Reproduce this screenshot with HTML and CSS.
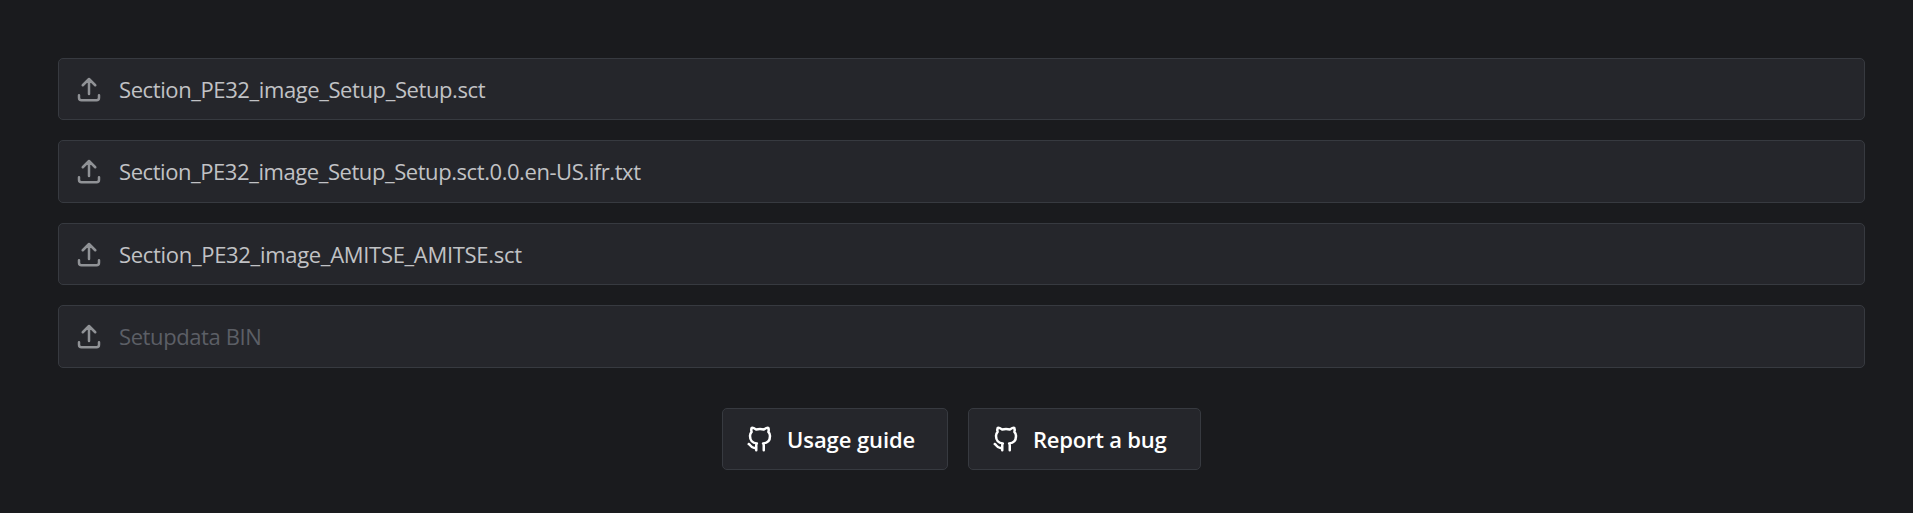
FILE: index.html
```html
<!DOCTYPE html>
<html lang="en">
<head>
<meta charset="utf-8">
<title>Setup files</title>
<link rel="stylesheet" href="styles.css">
</head>
<body>
<svg class="sprite" aria-hidden="true">
<symbol id="upload" viewBox="0 0 24 24"><path d="M4 17v2a2 2 0 0 0 2 2h12a2 2 0 0 0 2-2v-2M7 9l5-5l5 5M12 4v12"/></symbol>
<symbol id="github" viewBox="0 0 24 24"><path d="M9 19c-4.3 1.4 -4.3 -2.5 -6 -3m12 5v-3.5c0 -1 .1 -1.4 -.5 -2c2.8 -.3 5.5 -1.4 5.5 -6a4.6 4.6 0 0 0 -1.3 -3.2a4.2 4.2 0 0 0 -.1 -3.2s-1.1 -.3 -3.5 1.3a12.3 12.3 0 0 0 -6.2 0c-2.4 -1.6 -3.5 -1.3 -3.5 -1.3a4.2 4.2 0 0 0 -.1 3.2a4.6 4.6 0 0 0 -1.3 3.2c0 4.6 2.7 5.7 5.5 6c-.6 .6 -.6 1.2 -.5 2v3.5"/></symbol>
</svg>
<main class="page">
<div class="files">
<button class="file setup"><svg class="icon"><use href="#upload"/></svg><span>Section_PE32_image_Setup_Setup.sct</span></button>
<button class="file ifr"><svg class="icon"><use href="#upload"/></svg><span>Section_PE32_image_Setup_Setup.sct.0.0.en-US.ifr.txt</span></button>
<button class="file amitse"><svg class="icon"><use href="#upload"/></svg><span>Section_PE32_image_AMITSE_AMITSE.sct</span></button>
<button class="file empty"><svg class="icon"><use href="#upload"/></svg><span>Setupdata BIN</span></button>
</div>
<div class="links">
<a class="link guide"><svg class="icon"><use href="#github"/></svg><span>Usage guide</span></a>
<a class="link bug"><svg class="icon"><use href="#github"/></svg><span>Report a bug</span></a>
</div>
</main>
</body>
</html>
```

FILE: styles.css
```css
* { box-sizing: border-box; }
body { margin: 0; background: #1a1b1e; font-family: "Open Sans", "Noto Sans", sans-serif; }
.sprite { display: none; }
.page { padding: 58px 48px 0 58px; }
.files { display: grid; grid-template-rows: 62px 63px 62px 63px; gap: 20px; }
.file { display: flex; align-items: center; padding: 0 15px; border: 1px solid #373a40; border-radius: 5px; background: #25262b; color: #c1c2c5; font: 22px "Open Sans", "Noto Sans", sans-serif; text-align: left; }
.file:nth-child(even) { padding-bottom: 1px; }
.file .icon { margin-right: 15px; color: #909296; }
.setup { letter-spacing: -0.4px; }
.ifr { letter-spacing: -0.43px; }
.amitse { letter-spacing: -0.31px; }
.empty { letter-spacing: -0.4px; }
.empty span { color: #5c5f66; }
.icon { width: 30px; height: 30px; flex: none; fill: none; stroke: currentColor; stroke-width: 2; stroke-linecap: round; stroke-linejoin: round; }
.links { display: flex; justify-content: center; gap: 20px; margin-top: 40px; }
.link { display: flex; align-items: center; height: 62px; padding: 0 22px; border: 1px solid #373a40; border-radius: 5px; background: #25262b; color: #fff; font-size: 22px; font-weight: 600; white-space: nowrap; }
.link .icon { margin-right: 12px; }
.guide { width: 226px; letter-spacing: -0.08px; }
.bug { width: 233px; letter-spacing: -0.22px; }
```
